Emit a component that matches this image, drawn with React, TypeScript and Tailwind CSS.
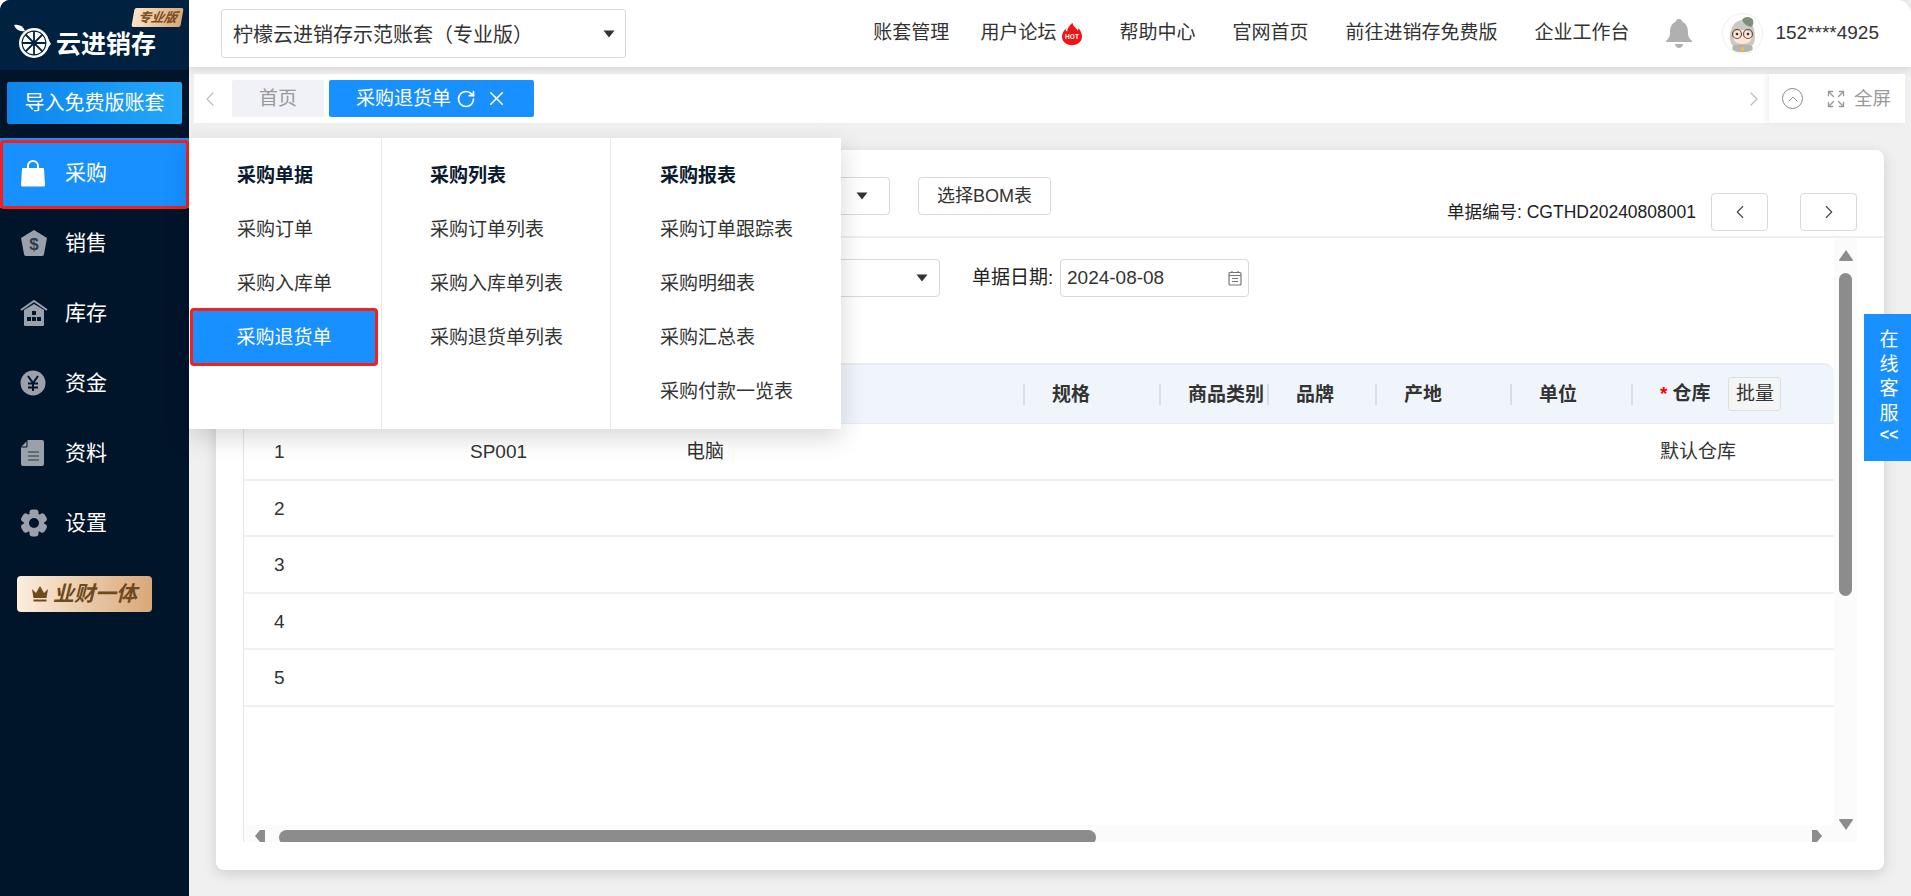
import React from 'react';
import { ChevronLeft, ChevronRight, ChevronUp, Expand, RotateCw, X } from 'lucide-react';

const Caret = ({ className = '' }: { className?: string }) => (
  <svg width="12" height="8" viewBox="0 0 12 8" className={className}>
    <path d="M0.5 0.5h11L6 7.5z" fill="#333" />
  </svg>
);

const LemonLogo = () => (
  <svg width="40" height="36" viewBox="0 0 40 36" className="shrink-0">
    <path d="M1 2c5-1 9 1 11 6-5 1-9-1-11-6z" fill="#fff" />
    <circle cx="21" cy="20" r="15" fill="#fff" />
    <path d="M33 12l5 9-5 6z" fill="#fff" />
    <circle cx="21" cy="20" r="11.8" fill="none" stroke="#00213f" strokeWidth="1.2" />
    <g stroke="#00213f" strokeWidth="1.8">
      <line x1="21" y1="8" x2="21" y2="32" />
      <line x1="9" y1="20" x2="33" y2="20" />
      <line x1="12.5" y1="11.5" x2="29.5" y2="28.5" />
      <line x1="29.5" y1="11.5" x2="12.5" y2="28.5" />
    </g>
    <circle cx="21" cy="20" r="2.6" fill="#00213f" />
  </svg>
);

const BagIcon = () => (
  <svg width="26" height="28" viewBox="0 0 26 28">
    <path d="M3 9h20a1 1 0 0 1 1 1l1 16a1.5 1.5 0 0 1-1.5 1.5h-21A1.5 1.5 0 0 1 1 26L2 10a1 1 0 0 1 1-1z" fill="#fff" />
    <path d="M8 12V7a5 5 0 0 1 10 0v5" fill="none" stroke="#fff" strokeWidth="2" />
  </svg>
);

const SaleIcon = () => (
  <svg width="28" height="28" viewBox="0 0 28 28">
    <path d="M14 1l13 8-3 16a2 2 0 0 1-2 2H6a2 2 0 0 1-2-2L1 9z" fill="#9aa1ab" />
    <text x="14" y="21" textAnchor="middle" fontSize="17" fontWeight="700" fill="#2f3b4a">$</text>
  </svg>
);

const StockIcon = () => (
  <svg width="28" height="26" viewBox="0 0 28 26">
    <path d="M1 10L14 1l13 9" fill="none" stroke="#9aa1ab" strokeWidth="2" />
    <path d="M4 10l10-6 10 6v15a1 1 0 0 1-1 1H5a1 1 0 0 1-1-1z" fill="#9aa1ab" />
    <g fill="#00142a">
      <rect x="12" y="11" width="4" height="4" />
      <rect x="7" y="17" width="4" height="4" />
      <rect x="12" y="17" width="4" height="4" />
      <rect x="17" y="17" width="4" height="4" />
    </g>
  </svg>
);

const YenIcon = () => (
  <svg width="26" height="26" viewBox="0 0 26 26">
    <circle cx="13" cy="13" r="12.5" fill="#9aa1ab" />
    <path d="M8 6l5 7 5-7M8 13.5h10M8 17.5h10M13 13v8" fill="none" stroke="#00142a" strokeWidth="2" />
  </svg>
);

const DocIcon = () => (
  <svg width="24" height="26" viewBox="0 0 24 26">
    <path d="M8 0h14a2 2 0 0 1 2 2v22a2 2 0 0 1-2 2H3a2 2 0 0 1-2-2V7z" fill="#9aa1ab" />
    <path d="M7 1v6H1" fill="none" stroke="#00142a" strokeWidth="1" />
    <path d="M8 12h11M8 16h11M8 20h11" stroke="#4f5966" strokeWidth="1.6" />
  </svg>
);

const GearIcon = () => (
  <svg width="28" height="28" viewBox="0 0 28 28">
    <g fill="#9aa1ab">
      <circle cx="14" cy="14" r="10" />
      {[0, 60, 120, 180, 240, 300].map((a) => (
        <rect key={a} x="9.5" y="0.5" width="9" height="8" rx="3" transform={`rotate(${a} 14 14)`} />
      ))}
    </g>
    <circle cx="14" cy="14" r="5" fill="#00142a" />
  </svg>
);

const Crown = () => (
  <svg width="18" height="18" viewBox="0 0 18 18" className="shrink-0">
    <path d="M1 4l4 4 4-7 4 7 4-4-1.5 9h-13z" fill="#6e4a1e" />
    <rect x="2.5" y="14.5" width="13" height="2" fill="#6e4a1e" />
  </svg>
);

const Flame = () => (
  <svg width="20" height="24" viewBox="0 0 23 26">
    <path d="M12 0c1 5 4 5 6 9 1-1 1-2 1-3 3 4 4 7 4 10 0 6-5 10-11.5 10S0 22 0 16c0-4 2-6 4-9 0 2 1 3 2 3 0-4 3-7 6-10z" fill="#f01414" />
    <text x="11.5" y="19" textAnchor="middle" fontSize="7.5" fontWeight="700" fill="#fff">HOT</text>
  </svg>
);

const Bell = () => (
  <svg width="26" height="29" viewBox="0 0 26 29">
    <path d="M13 0c2 0 3 1 3.5 3C21 5 22 9 22 14c0 4 2 6 4 8v1H0v-1c2-2 4-4 4-8 0-5 1-9 5.5-11C10 1 11 0 13 0z" fill="#b0b0b0" />
    <path d="M9 25h8c0 2-2 4-4 4s-4-2-4-4z" fill="#b0b0b0" />
  </svg>
);

const Avatar = () => (
  <svg width="41" height="41" viewBox="0 0 41 41">
    <circle cx="20.5" cy="20.5" r="20" fill="#fff" stroke="#eeeeee" />
    <path d="M8 24c0-10 5-17 13-17s12 7 12 17c0 4-1 7-3 9H11c-2-2-3-5-3-9z" fill="#c9c9c6" />
    <path d="M20 7c2-4 9-4 11 0 1 3 0 6-2 7-4-1-7-3-9-7z" fill="#7f8f7d" />
    <path d="M11 23c0-4 4-6 9-6s10 2 10 6c0 5-4 8-10 8s-9-3-9-8z" fill="#fbe6da" />
    <circle cx="15" cy="21" r="4.5" fill="none" stroke="#7a4a35" strokeWidth="1.2" />
    <circle cx="26" cy="21" r="4.5" fill="none" stroke="#7a4a35" strokeWidth="1.2" />
    <circle cx="15" cy="21" r="1.3" fill="#333" />
    <circle cx="26" cy="21" r="1.3" fill="#333" />
    <path d="M11 33c3-2 16-2 19 0 1 2 1 3 0 4-4 3-15 3-19 0-1-1-1-2 0-4z" fill="#b3b3b0" />
    <circle cx="20.5" cy="36" r="2" fill="#f2c230" />
  </svg>
);

const CalendarIcon = () => (
  <svg width="14" height="16" viewBox="0 0 14 16" className="ml-auto">
    <rect x="1" y="2.5" width="12" height="12.5" rx="1" fill="none" stroke="#777" strokeWidth="1.2" />
    <path d="M1 5.5h12M4 1v2M10 1v2M4 8.5h6M4 11.5h6" stroke="#777" strokeWidth="1.2" />
  </svg>
);

const sideMenu = [
  { label: '采购', icon: <BagIcon />, active: true },
  { label: '销售', icon: <SaleIcon /> },
  { label: '库存', icon: <StockIcon /> },
  { label: '资金', icon: <YenIcon /> },
  { label: '资料', icon: <DocIcon /> },
  { label: '设置', icon: <GearIcon /> },
];

const popupCols = [
  { title: '采购单据', items: ['采购订单', '采购入库单', '采购退货单'], width: 'w-[193px]', pad: 'pl-[48px]' },
  { title: '采购列表', items: ['采购订单列表', '采购入库单列表', '采购退货单列表'], width: 'w-[229px]', pad: 'pl-[48px]' },
  { title: '采购报表', items: ['采购订单跟踪表', '采购明细表', '采购汇总表', '采购付款一览表'], width: 'w-[230px]', pad: 'pl-[49px]' },
];

const gridCols = 'grid grid-cols-[226px_216px_338px_136px_108px_108px_135px_121px_203px]';

const headCols = ['规格', '商品类别', '品牌', '产地', '单位'];

const rows = [
  ['1', 'SP001', '电脑', '', '', '', '', '', '默认仓库'],
  ['2', '', '', '', '', '', '', '', ''],
  ['3', '', '', '', '', '', '', '', ''],
  ['4', '', '', '', '', '', '', '', ''],
  ['5', '', '', '', '', '', '', '', ''],
];

const Sidebar = () => (
  <aside className="w-[189px] shrink-0 bg-[#00142a] rounded-tl-[10px] overflow-hidden flex flex-col">
    <div className="relative h-[70px] bg-[#00213f] flex items-end pl-[13px] pb-[11px]">
      <LemonLogo />
      <span className="ml-[3px] text-[25px] leading-[30px] font-bold text-white whitespace-nowrap">云进销存</span>
      <span className="absolute left-[133px] top-[8px] w-[49px] h-[19px] -skew-x-[10deg] rounded-[2px] bg-gradient-to-r from-[#fbe3c6] to-[#d9a878] flex items-center justify-center text-[13px] font-bold italic text-[#7a4d22]">
        专业版
      </span>
    </div>
    <button className="mt-[12px] mx-[7px] h-[42px] rounded-[2px] bg-gradient-to-r from-[#0c84ee] to-[#24a8f8] text-white text-[20px]">
      导入免费版账套
    </button>
    <nav className="mt-[14px]">
      {sideMenu.map((m) => (
        <div
          key={m.label}
          className={
            m.active
              ? 'relative h-[70px] bg-[#1890ff] flex items-center text-white text-[21px]'
              : 'h-[70px] flex items-center text-white text-[21px]'
          }
        >
          <span className="w-[65px] pl-[20px] flex items-center">{m.icon}</span>
          {m.label}
          {m.active && (
            <span className="absolute left-0 right-0 top-[2px] -bottom-[1px] border-[3px] border-[#f5201c] rounded-[4px]" />
          )}
        </div>
      ))}
    </nav>
    <div className="mt-[18px] ml-[17px] w-[135px] h-[36px] rounded-[4px] bg-gradient-to-r from-[#fdeedd] to-[#d8a878] flex items-center pl-[14px] gap-[4px] text-[21px] font-bold italic text-[#6e4a1e] whitespace-nowrap">
      <Crown />
      业财一体
    </div>
  </aside>
);

const TopBar = () => (
  <header className="relative z-10 h-[67px] shrink-0 bg-white rounded-tr-[14px] shadow-[0_2px_8px_rgba(0,0,0,0.12)] flex items-center pl-[32px] pr-[32px] text-[19px] text-[#333]">
    <div className="w-[405px] h-[49px] border border-[#d9d9d9] rounded-[3px] flex items-center pl-[11px] pr-[10px] text-[20px]">
      <span className="pt-[2px]">柠檬云进销存示范账套（专业版）</span>
      <Caret className="ml-auto" />
    </div>
    <div className="ml-auto flex items-center gap-[37px] whitespace-nowrap">
      <span>账套管理</span>
      <span className="-ml-[6px] flex items-center gap-[6px]">
        用户论坛
        <Flame />
      </span>
      <span>帮助中心</span>
      <span>官网首页</span>
      <span>前往进销存免费版</span>
      <span>企业工作台</span>
      <Bell />
      <span className="-ml-[7px] flex items-center gap-[12px]">
        <Avatar />
        152****4925
      </span>
    </div>
  </header>
);

const TabBar = () => (
  <div className="mt-[7px] ml-[5px] mr-[6px] h-[49px] shrink-0 bg-white flex items-center text-[19px]">
    <ChevronLeft size={24} strokeWidth={1.2} className="ml-[4px] text-[#b8bcc6]" />
    <div className="ml-[10px] w-[92px] h-[37px] rounded-[2px] bg-[#f0f2f7] flex items-center justify-center pt-[2px] text-[#999]">首页</div>
    <div className="ml-[5px] w-[205px] h-[37px] rounded-[2px] bg-[#1890ff] flex items-center pl-[27px] text-white whitespace-nowrap">
      <span className="pt-[2px]">采购退货单</span>
      <RotateCw size={20} strokeWidth={2} className="ml-[5px]" />
      <X size={23} strokeWidth={1.6} className="ml-[9px]" />
    </div>
    <ChevronRight size={24} strokeWidth={1.2} className="ml-auto mr-[3px] text-[#b8bcc6]" />
    <div className="w-[136px] h-full shadow-[-3px_0_6px_rgba(0,0,0,0.06)] flex items-center pl-[13px] text-[#999] text-[18.5px] whitespace-nowrap">
      <span className="w-[21px] h-[21px] rounded-full border border-[#888] flex items-center justify-center">
        <ChevronUp size={16} strokeWidth={1.4} className="text-[#888]" />
      </span>
      <Expand size={20} strokeWidth={1.6} className="ml-[23px] text-[#999]" />
      <span className="ml-[8px]">全屏</span>
    </div>
  </div>
);

const VScroll = () => (
  <div className="w-[23px] shrink-0 bg-[#fbfbfb] flex flex-col items-center pt-[12px] pb-[12px]">
    <svg width="14" height="11" viewBox="0 0 14 11">
      <path d="M7 0l7 10a1 1 0 0 1-1 1H1a1 1 0 0 1-1-1z" fill="#8c8c8c" />
    </svg>
    <div className="mt-[12px] w-[13px] h-[323px] rounded-[7px] bg-[#8c8c8c]" />
    <svg width="14" height="11" viewBox="0 0 14 11" className="mt-auto">
      <path d="M7 11L0 1a1 1 0 0 1 1-1h12a1 1 0 0 1 1 1z" fill="#8c8c8c" />
    </svg>
  </div>
);

const HScroll = () => (
  <div className="h-[17px] shrink-0 bg-[#fbfbfb] border-l border-[#e5e5e5] pt-[5px] overflow-hidden">
    <div className="flex items-start">
      <svg width="10" height="12" viewBox="0 0 10 12" className="ml-[11px]">
        <path d="M10 0v12H5L0 6l5-6z" fill="#8c8c8c" />
      </svg>
      <div className="ml-[14px] w-[817px] h-[15px] rounded-[8px] bg-[#8c8c8c]" />
      <svg width="10" height="12" viewBox="0 0 10 12" className="ml-auto mr-[12px]">
        <path d="M0 0v12h5l5-6-5-6z" fill="#8c8c8c" />
      </svg>
    </div>
  </div>
);

const BillTable = () => (
  <div className="flex-1 min-h-0 flex flex-col text-[#333] text-[19px]">
    <div className={`${gridCols} h-[61px] shrink-0 bg-[#f0f5fc] border-t-2 border-b border-[#e8ecf2] rounded-t-[10px] font-bold`}>
      <div />
      <div />
      <div />
      {headCols.map((h) => (
        <div key={h} className="flex items-center">
          <span className="h-[21px] border-l-2 border-[#d6dee9] pl-[27px] pt-[2px] flex items-center whitespace-nowrap">{h}</span>
        </div>
      ))}
      <div className="flex items-center">
        <span className="h-[21px] border-l-2 border-[#d6dee9] pl-[27px] flex items-center whitespace-nowrap">
          <span className="text-[#f00] text-[19px] mr-[5px]">*</span>
          仓库
          <span className="ml-[18px] w-[53px] h-[34px] rounded-[3px] border border-[#dedede] bg-[#f5f5f5] flex items-center justify-center font-normal">批量</span>
        </span>
      </div>
    </div>
    <div className="flex-1 border-l border-[#e5e5e5]">
      {rows.map((row) => (
        <div key={row[0]} className={`${gridCols} h-[56.6px] border-b-2 border-[#eef0f5] items-center pt-[2px]`}>
          {row.map((cell, i) => (
            <div key={i} className={i === 0 ? 'pl-[30px]' : i === 8 ? 'pl-[28px]' : ''}>{cell}</div>
          ))}
        </div>
      ))}
    </div>
  </div>
);

const BillCard = () => (
  <section className="flex-1 min-h-0 mt-[27px] mx-[27px] mb-[26px] bg-white rounded-[8px] shadow-[0_4px_14px_rgba(0,0,0,0.14)] flex flex-col text-[#333]">
    <div className="h-[88px] shrink-0 border-b-2 border-[#eeeeee] flex items-start pl-[484px] pr-[27px]">
      <div className="mt-[27px] w-[190px] h-[38px] border border-[#d9d9d9] rounded-[4px] flex items-center pr-[21px]">
        <Caret className="ml-auto" />
      </div>
      <button className="mt-[27px] ml-[28px] w-[133px] h-[38px] border border-[#d9d9d9] rounded-[4px] text-[18px]">选择BOM表</button>
      <div className="ml-auto mt-[43px] flex items-center text-[17.5px] text-[#222] whitespace-nowrap">
        单据编号: CGTHD20240808001
        <button className="ml-[15px] w-[57px] h-[38px] border border-[#d9d9d9] rounded-[4px] flex items-center justify-center">
          <ChevronLeft size={22} strokeWidth={1.2} className="text-[#444]" />
        </button>
        <button className="ml-[32px] w-[57px] h-[38px] border border-[#d9d9d9] rounded-[4px] flex items-center justify-center">
          <ChevronRight size={22} strokeWidth={1.2} className="text-[#444]" />
        </button>
      </div>
    </div>
    <div className="flex-1 min-h-0 ml-[27px] mr-[27px] mb-[28px] flex">
      <div className="flex-1 min-w-0 flex flex-col">
        <div className="h-[125px] shrink-0 pt-[21px] pl-[457px] flex items-start text-[19px]">
          <div className="w-[240px] h-[38px] border border-[#d9d9d9] rounded-[4px] flex items-center pr-[11px]">
            <Caret className="ml-auto" />
          </div>
          <span className="ml-[32px] w-[88px] h-[38px] flex items-center text-[#222] whitespace-nowrap">单据日期:</span>
          <div className="w-[189px] h-[38px] border border-[#d9d9d9] rounded-[4px] flex items-center pl-[6px] pr-[6px]">
            <span className="pt-[1px]">2024-08-08</span>
            <CalendarIcon />
          </div>
        </div>
        <BillTable />
        <HScroll />
      </div>
      <VScroll />
    </div>
  </section>
);

const PurchaseMenu = () => (
  <div className="absolute z-20 left-[189px] top-[138px] h-[291px] bg-white shadow-[0_8px_24px_rgba(0,0,0,0.16)] flex text-[19px] text-[#333]">
    {popupCols.map((col, c) => (
      <div key={col.title} className={`${col.width} pt-[11px] ${c < 2 ? 'border-r border-[#e8e8e8]' : ''}`}>
        <div className={`h-[54px] ${col.pad} flex items-center font-bold text-[#0a1a2f]`}>{col.title}</div>
        {col.items.map((item) =>
          item === '采购退货单' ? (
            <div key={item} className="h-[58px] -mt-[3px] -mb-[1px] ml-[1px] mr-[3px] pt-[2px] rounded-[4px] border-[3px] border-[#f5201c] bg-[#1890ff] flex items-center justify-center text-white">
              {item}
            </div>
          ) : (
            <div key={item} className={`h-[54px] ${col.pad} flex items-center whitespace-nowrap`}>{item}</div>
          )
        )}
      </div>
    ))}
  </div>
);

const ServiceTab = () => (
  <div className="absolute z-20 right-0 top-[314px] w-[47px] h-[147px] bg-[#1890ff] pt-[14px] pl-[3px] flex flex-col items-center text-white text-[19px] leading-[24.5px]">
    <span>在</span>
    <span>线</span>
    <span>客</span>
    <span>服</span>
    <span className="text-[16px] leading-[18px] font-bold">&lt;&lt;</span>
  </div>
);

export default function App() {
  return (
    <div className="relative w-[1911px] h-[896px] overflow-hidden bg-white flex [font-family:'Liberation_Sans','Noto_Sans_CJK_SC',sans-serif]">
      <Sidebar />
      <main className="flex-1 min-w-0 bg-[#f0f0f0] flex flex-col">
        <TopBar />
        <TabBar />
        <BillCard />
      </main>
      <PurchaseMenu />
      <ServiceTab />
    </div>
  );
}
